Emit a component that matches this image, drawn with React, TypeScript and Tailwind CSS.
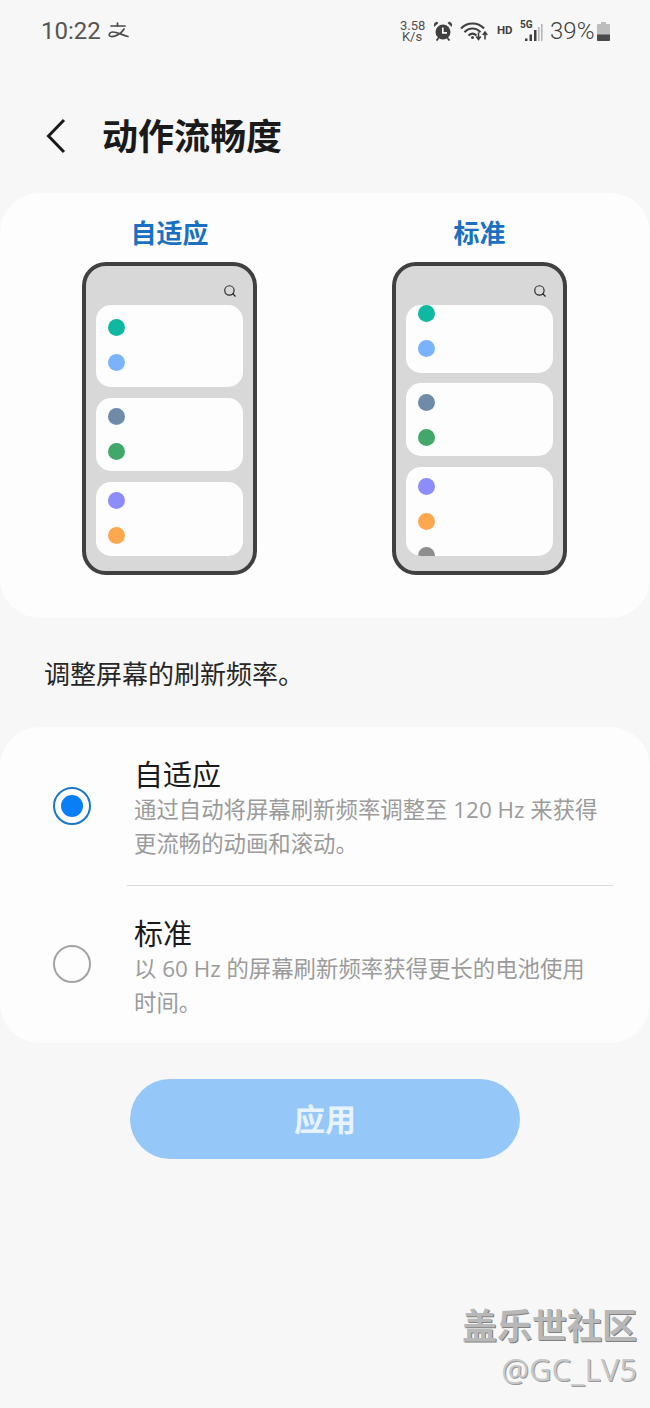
import { Search } from 'lucide-react';

const cjk = "font-['Noto_Sans_CJK_SC','Noto_Sans',sans-serif]";

function AlipayMark() {
  return (
    <svg width="24" height="20" viewBox="0 0 24 20" fill="none" stroke="#4a4a4a" strokeWidth="1.700" strokeLinecap="round">
      <path d="M4 5H18" />
      <path d="M10.500 2V5" />
      <path d="M17 8C14 13 8 16 4 15.500C1 15 2 11 6 11C10 11 15 14 21 15.500" />
    </svg>
  );
}

function AlarmIcon() {
  return (
    <svg width="20" height="20" viewBox="0 0 20 20">
      <circle cx="10" cy="11" r="7.500" fill="#404040" />
      <path d="M9.800 6.500V11.800H14" fill="none" stroke="#f7f7f7" strokeWidth="1.700" />
      <path d="M1 6 5.500 2 3.500 .6 1 2.800Z M19 6 14.500 2 16.500 .6 19 2.800Z" fill="#404040" />
      <path d="M5.500 17 3.500 19.500M14.500 17l2 2.500" stroke="#404040" strokeWidth="1.800" />
    </svg>
  );
}

function WifiIcon() {
  return (
    <svg width="28" height="20" viewBox="0 0 28 20" fill="none" stroke="#404040" strokeWidth="2">
      <path d="M1 7.500C7 .8 18 .8 24 7.500" />
      <path d="M4.500 11.200C9 6.300 16 6.300 20.500 11.200" />
      <path d="M8.500 14.500c2.500-2.300 5.500-2.300 8 0" />
      <circle cx="12.500" cy="16.500" r="1.500" fill="#404040" stroke="none" />
      <path d="M18.500 11.500v7M16.300 15.500l2.200 3 2.200-3" strokeWidth="1.600" />
      <path d="M25 18.500v-7M22.800 14l2.200-3 2.200 3" strokeWidth="1.600" />
    </svg>
  );
}

function SignalIcon() {
  return (
    <svg width="18" height="19" viewBox="0 0 18 19">
      <rect x="0" y="15.500" width="2.500" height="2.500" fill="#404040" />
      <rect x="4.500" y="11.500" width="2.500" height="6.500" fill="#404040" />
      <rect x="9" y="7" width="2.500" height="11" fill="#404040" />
      <rect x="13" y="4" width="1.600" height="14" fill="#b5b5b5" />
      <rect x="16" y="1" width="1.600" height="17" fill="#b5b5b5" />
    </svg>
  );
}

function BatteryIcon() {
  return (
    <svg width="13" height="19" viewBox="0 0 13 19">
      <path d="M4 0h5v2h3a1 1 0 0 1 1 1v15a1 1 0 0 1-1 1H1a1 1 0 0 1-1-1V3a1 1 0 0 1 1-1h3Z" fill="#bdbdbd" />
      <path d="M0 12.500h13v5.500a1 1 0 0 1-1 1H1a1 1 0 0 1-1-1Z" fill="#4a4a4a" />
    </svg>
  );
}

function StatusBar() {
  return (
    <div className="h-[60px] flex items-center pt-[2px] pl-[41px] pr-[40px] text-[#555] font-['Roboto',sans-serif]">
      <span className="text-[24px] leading-none">10:22</span>
      <span className="ml-[6px] flex"><AlipayMark /></span>
      <div className="ml-auto flex items-center">
        <span className="text-[13px] leading-[11px] text-center text-[#505050] w-[24px]">3.58<br />K/s</span>
        <span className="ml-[9px] flex"><AlarmIcon /></span>
        <span className="ml-[7px] flex"><WifiIcon /></span>
        <span className="ml-[9px] text-[11.500px] font-bold text-[#404040] w-[16px]">HD</span>
        <span className="ml-[7px] relative w-[23px] h-[20px] mr-[7px]">
          <span className="absolute left-0 -top-[1px] text-[10px] leading-[10px] font-bold text-[#404040]">5G</span>
          <span className="absolute right-0 -bottom-[1px] flex"><SignalIcon /></span>
        </span>
        <span className="text-[24px] leading-none font-light text-[#3f3f3f] w-[44px]">39%</span>
        <span className="ml-[3px] flex"><BatteryIcon /></span>
      </div>
    </div>
  );
}

interface MiniCard {
  box: string;
  dots: string[];
}

const adaptive: MiniCard[] = [
  { box: 'h-[82px] pt-[14px]', dots: ['bg-[#0fb9a1]', 'bg-[#7ab3fb]'] },
  { box: 'h-[73px] mt-[11px] pt-[10px]', dots: ['bg-[#6e8ca8]', 'bg-[#41a86a]'] },
  { box: 'h-[74px] mt-[11px] pt-[10px]', dots: ['bg-[#8c8cfa]', 'bg-[#fda84f]'] },
];

const standard: MiniCard[] = [
  { box: 'h-[68px] pt-0', dots: ['bg-[#0fb9a1]', 'bg-[#7ab3fb]'] },
  { box: 'h-[73px] mt-[10px] pt-[11px]', dots: ['bg-[#6e8ca8]', 'bg-[#41a86a]'] },
  { box: 'h-[89px] mt-[11px] pt-[11px]', dots: ['bg-[#8c8cfa]', 'bg-[#fda84f]', 'bg-[#8e8e8e]'] },
];

function Phone({ label, cards }: { label: string; cards: MiniCard[] }) {
  return (
    <div className="w-[175px] flex flex-col items-center">
      <div className="h-[36px] -mt-[2px] mb-[2px] text-[26px] leading-[36px] font-bold text-[#1a70c2]">{label}</div>
      <div className="mt-[10px] w-[175px] h-[313px] border-[4px] border-[#404040] rounded-[24px] bg-[#d8d8d8] px-[10px]">
        <div className="h-[39px] flex justify-end items-start pt-[18px] pr-[6px]">
          <Search size={14} strokeWidth={2} color="#2a2a2a" />
        </div>
        {cards.map((card, i) => (
          <div key={i} className={`${card.box} bg-[#fdfdfd] rounded-[15px] overflow-hidden pl-[12px] flex flex-col gap-[17.500px]`}>
            {card.dots.map((dot, j) => (
              <div key={j} className={`${dot} w-[17px] h-[17px] shrink-0 rounded-full`} />
            ))}
          </div>
        ))}
      </div>
    </div>
  );
}

export default function App() {
  return (
    <div className={`relative w-[650px] min-h-[1408px] bg-[#f7f7f7] overflow-hidden ${cjk}`}>
      <StatusBar />

      <div className="mt-[42px] h-[68px] flex items-center pl-[46px]">
        <svg width="20" height="36" viewBox="0 0 20 36" fill="none" stroke="#1a1a1a" strokeWidth="3">
          <path d="M18 2 2.500 18 18 34" />
        </svg>
        <h1 className="ml-[36px] -mt-[4px] text-[36px] font-bold text-[#1a1a1a] leading-none">动作流畅度</h1>
      </div>

      <div className="mt-[23px] h-[425px] rounded-[40px] bg-[#fdfdfd] pt-[23px] pl-[82px] flex gap-[136px]">
        <Phone label="自适应" cards={adaptive} />
        <div className="-ml-[1px]"><Phone label="标准" cards={standard} /></div>
      </div>

      <p className="mt-[37px] mb-[36px] h-[36px] pl-[44px] text-[26px] leading-[36px] text-[#262626]">调整屏幕的刷新频率。</p>

      <div className="h-[316px] rounded-[40px] bg-[#fdfdfd]">
        <div className="h-[158px] flex pl-[53px]">
          <div className="mt-[60px] w-[38px] h-[38px] rounded-full border-[2px] border-[#1a78c8] flex items-center justify-center">
            <div className="w-[22px] h-[22px] rounded-full bg-[#0a7ff5]" />
          </div>
          <div className="ml-[43px] pt-[28px]">
            <div className="text-[29px] leading-[36px] text-[#1a1a1a]">自适应</div>
            <div className="mt-[2px] text-[22.400px] leading-[34px] text-[#9b9b9b] whitespace-nowrap font-['Open_Sans','Noto_Sans_CJK_SC',sans-serif]">
              通过自动将屏幕刷新频率调整至 120 Hz 来获得<br />更流畅的动画和滚动。
            </div>
          </div>
        </div>
        <div className="ml-[127px] mr-[37px] h-[1px] bg-[#dcdcdc]" />
        <div className="flex pl-[53px]">
          <div className="mt-[59px] w-[38px] h-[38px] rounded-full border-[2px] border-[#a3a3a3]" />
          <div className="ml-[43px] pt-[28px]">
            <div className="text-[29px] leading-[36px] text-[#1a1a1a]">标准</div>
            <div className="mt-[2px] text-[22.400px] leading-[34px] text-[#9b9b9b] whitespace-nowrap font-['Open_Sans','Noto_Sans_CJK_SC',sans-serif]">
              以 60 Hz 的屏幕刷新频率获得更长的电池使用<br />时间。
            </div>
          </div>
        </div>
      </div>

      <button className="block mt-[36px] ml-[130px] pb-[2px] w-[390px] h-[80px] rounded-full bg-[#95c8f8] text-[31px] font-bold text-[#e8f3fd]">
        应用
      </button>

      {/* watermark sits on top of the page */}
      <div className="absolute right-[13px] top-[1302px] text-right">
        <div className="text-[35px] leading-[44px] font-bold text-[#b8b8b8] [text-shadow:1px_1px_0_#808080]">盖乐世社区</div>
        <div className="mt-[3px] text-[31px] leading-[40px] text-[#c8c8c8] font-['Open_Sans',sans-serif] [text-shadow:1px_1px_0_#999]">@GC_LV5</div>
      </div>
    </div>
  );
}
